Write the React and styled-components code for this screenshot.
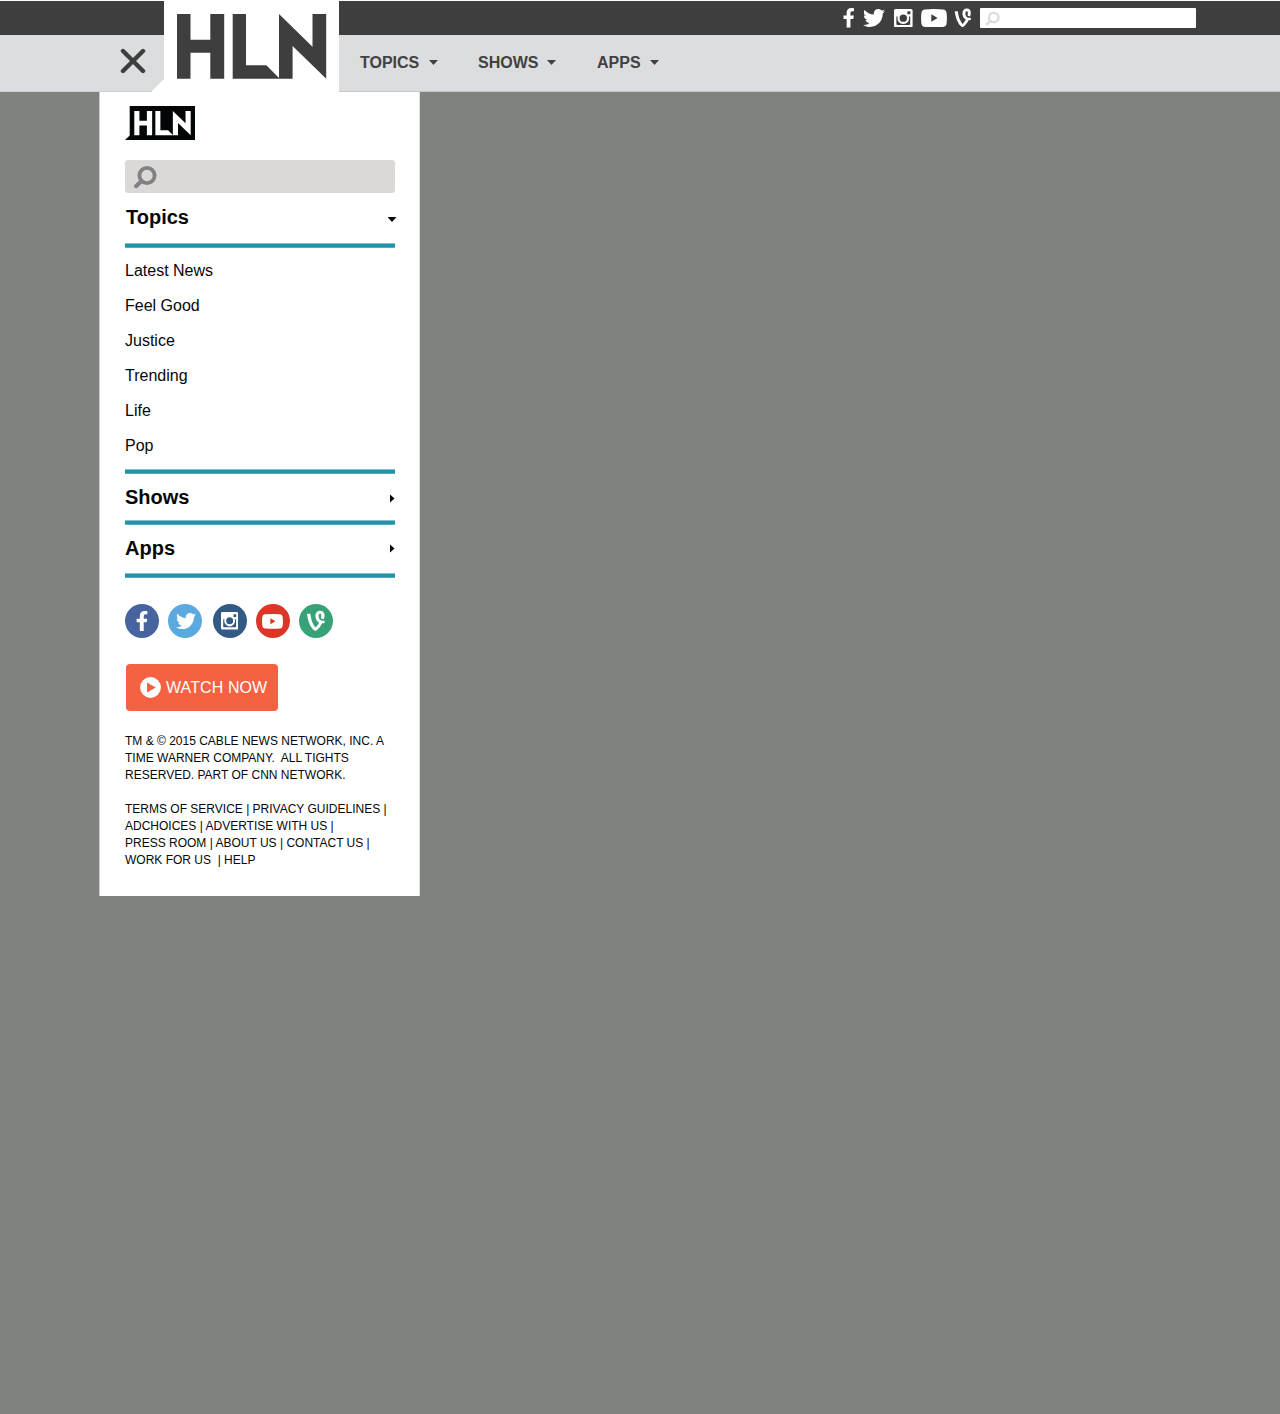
import React from "react";
import styled, { createGlobalStyle } from "styled-components";
import { FaFacebookF, FaTwitter, FaVine } from "react-icons/fa";

const GlobalStyle = createGlobalStyle`
  * { box-sizing: border-box; }
  body {
    margin: 0;
    background: #808280;
    font-family: "Liberation Sans", Arial, sans-serif;
    color: #060808;
  }
`;

const Page = styled.div`
  min-height: 1414px;
  background: #808280;
`;

const Header = styled.header`
  display: grid;
  grid-template-columns: 164px 174.5px 1fr;
  grid-template-rows: 34px 57px;
  padding-top: 1px;
  background: #fff;
`;

const TopStrip = styled.div`
  background: #3e3e3e;
`;

const LogoCell = styled.div`
  grid-column: 2;
  grid-row: 1 / 3;
  display: flex;
  padding: 13px 0 0 12.5px;
`;

const TopBar = styled.div`
  grid-column: 3;
  display: flex;
  align-items: center;
  background: #3e3e3e;
  color: #fff;
  padding-left: 503.5px;
`;

const SocialLink = styled.a`
  display: flex;
  justify-content: center;
  align-items: center;
  color: #fff;
  width: ${(p) => p.$width}px;
  height: 20px;
  margin-right: ${(p) => p.$gap}px;
  svg { flex: none; }
`;

const TopSearch = styled.div`
  width: 216px;
  height: 20px;
  padding: 3px 5px;
  border-radius: 1px;
  background: #fff;
  color: #dcdcdc;
`;

const MenuCell = styled.div`
  grid-column: 1;
  grid-row: 2;
  background: #dcddde;
  border-bottom: 1px solid #cfd1d0;
  padding: 13px 0 0 120px;
  clip-path: polygon(0 0, 100% 0, 100% 44px, 151px 100%, 0 100%);
`;

const Nav = styled.nav`
  grid-column: 3;
  grid-row: 2;
  display: flex;
  background: #dcddde;
  border-bottom: 1px solid #c5c9c6;
  padding: 18px 0 0 21.5px;
`;

const NavItem = styled.a`
  display: flex;
  width: ${(p) => p.$width}px;
  color: #414141;
  font-size: 16px;
  font-weight: 700;
  line-height: 19px;
`;

const NavLabel = styled.span`
  width: ${(p) => p.$width}px;
`;

const CaretDown = styled.span`
  width: 9px;
  height: 5px;
  margin-top: ${(p) => p.$top}px;
  background: currentColor;
  clip-path: polygon(0 0, 100% 0, 50% 100%);
`;

const CaretRight = styled(CaretDown)`
  width: 5px;
  height: 9px;
  margin-right: 0.5px;
  clip-path: polygon(0 0, 100% 50%, 0 100%);
`;

const Drawer = styled.aside`
  width: 321px;
  height: 804px;
  margin-left: 99px;
  padding: 14px 24px 0 25px;
  background: #fff;
  border-left: 1px solid #c8c9c8;
  border-right: 1px solid #dcdddc;
`;

const DrawerSearch = styled.div`
  width: 270px;
  height: 33px;
  margin-top: 20px;
  padding: 5px 8px;
  border-radius: 3px;
  background: #dad9d7;
  color: #808184;
`;

const SectionHead = styled.h2`
  display: flex;
  justify-content: space-between;
  width: ${(p) => p.$width || 270}px;
  height: ${(p) => p.$height}px;
  margin: 0;
  padding: ${(p) => p.$top}px 0 0 ${(p) => p.$indent || 0}px;
  font-size: 20px;
  line-height: 24px;
`;

const Rule = styled.div`
  width: 270px;
  height: 5px;
  background: #2094ab;
  border-top: 1px solid #85bfca;
  border-bottom: 1px solid #55abbb;
`;

const TopicList = styled.ul`
  list-style: none;
  margin: 0;
  padding: 5px 0 6px;
`;

const Topic = styled.li`
  height: 35px;
  font-size: 16px;
  line-height: 35px;
`;

const SocialRow = styled.div`
  display: flex;
  margin-top: 26px;
`;

const RoundLink = styled.a`
  display: flex;
  align-items: center;
  justify-content: center;
  flex: none;
  width: 34.4px;
  height: 34.4px;
  margin-right: ${(p) => p.$gap}px;
  padding-left: ${(p) => p.$left || 0}px;
  padding-right: ${(p) => p.$right || 0}px;
  border-radius: 50%;
  background: ${(p) => p.$color};
  color: #fff;
  svg { flex: none; }
`;

const WatchButton = styled.a`
  display: flex;
  align-items: center;
  gap: 5px;
  width: 152px;
  height: 47px;
  margin: 25.6px 0 0 1.4px;
  padding-left: 13.6px;
  border-radius: 4px;
  background: #f46242;
  color: #fff;
  font-size: 16px;
  line-height: 20px;
`;

const WatchLabel = styled.span`
  padding-top: 2px;
  white-space: nowrap;
  letter-spacing: 0.1px;
`;

const Legal = styled.p`
  margin: ${(p) => p.$top}px 0 0;
  font-size: 12px;
`;

const LegalLine = styled.span`
  display: block;
  line-height: 17px;
  white-space: pre;
`;

const HLN_SHAPE =
  "M0 0H13.5V25.8H33.3V0H47.2V64.8H33.3V38.8H13.5V64.8H0Z" +
  "M55.7 0H69V51.2H89.4L102 64V0L135.5 32.7V0H149.2V64.8L115.6 32V64.8H55.7Z";

function Logo() {
  return (
    <svg width="150" height="65" viewBox="0 0 150 65" fill="#3e3e3e" aria-label="HLN">
      <path d={HLN_SHAPE} />
    </svg>
  );
}

function SmallLogo() {
  return (
    <svg width="70" height="34" viewBox="0 0 70 34" display="block" aria-label="HLN">
      <path d="M4.7 0H70V34H0L4.7 29.5Z" fill="#030606" />
      <path d={HLN_SHAPE} fill="#fff" transform="translate(9.3 5) scale(.378 .375)" />
    </svg>
  );
}

function CloseIcon() {
  return (
    <svg width="26" height="26" viewBox="0 0 26 26" stroke="#3e3e3e" strokeWidth="4.4" strokeLinecap="round">
      <path d="M3 3L23 23M23 3L3 23" />
    </svg>
  );
}

function SearchIcon({ size }) {
  return (
    <svg width={size} height={size} viewBox="0 0 24 24" fill="none" stroke="currentColor" display="block">
      <circle cx="14" cy="10.5" r="7.6" strokeWidth="3.8" />
      <path d="M8.5 16L3 21.2" strokeWidth="4" strokeLinecap="round" />
    </svg>
  );
}

function CameraIcon({ width, height }) {
  return (
    <svg width={width} height={height} viewBox="0 0 18 18" preserveAspectRatio="none">
      <path
        fill="currentColor"
        fillRule="evenodd"
        d="M1.5 0H16.5Q18 0 18 1.5V16.5Q18 18 16.5 18H1.5Q0 18 0 16.5V1.5Q0 0 1.5 0ZM2.3 7.3V14.8Q2.3 15.6 3.1 15.6H14.9Q15.7 15.6 15.7 14.8V7.3H14.3A5.6 5.6 0 1 1 3.7 7.3ZM13 2.2V5.2H15.8V2.2ZM9 5.4A3.6 3.6 0 1 0 9 12.6A3.6 3.6 0 1 0 9 5.4Z"
      />
    </svg>
  );
}

function VideoIcon({ width, height }) {
  return (
    <svg width={width} height={height} viewBox="0 0 26 18" preserveAspectRatio="none">
      <path
        fill="currentColor"
        fillRule="evenodd"
        d="M4 .4Q13-.4 22 .4Q25.3 .6 25.6 4Q26.2 9 25.6 14Q25.3 17.4 22 17.6Q13 18.4 4 17.6Q.7 17.4 .4 14Q-.2 9 .4 4Q.7 .6 4 .4ZM10.3 5.2V12.4L16.6 8.8Z"
      />
    </svg>
  );
}

function PlayIcon() {
  return (
    <svg width="21" height="21" viewBox="0 0 21 21">
      <circle cx="10.5" cy="10.5" r="10.4" fill="#fff" />
      <path d="M7 5.6L15.8 10.5L7 15.4Z" fill="#f46242" />
    </svg>
  );
}

const topics = ["Latest News", "Feel Good", "Justice", "Trending", "Life", "Pop"];

export default function App() {
  return (
    <Page>
      <GlobalStyle />
      <Header>
        <TopStrip />
        <LogoCell><Logo /></LogoCell>
        <TopBar>
          <SocialLink $width={13} $gap={8}><FaFacebookF size={19.5} /></SocialLink>
          <SocialLink $width={22} $gap={9}><FaTwitter size={22} /></SocialLink>
          <SocialLink $width={19} $gap={8}><CameraIcon width={18.6} height={18.4} /></SocialLink>
          <SocialLink $width={26} $gap={8}><VideoIcon width={26} height={18.4} /></SocialLink>
          <SocialLink $width={16} $gap={9}><FaVine size={21.5} /></SocialLink>
          <TopSearch><SearchIcon size={15} /></TopSearch>
        </TopBar>
        <MenuCell><CloseIcon /></MenuCell>
        <Nav>
          <NavItem $width={118}><NavLabel $width={69}>TOPICS</NavLabel><CaretDown $top={7} /></NavItem>
          <NavItem $width={119}><NavLabel $width={69}>SHOWS</NavLabel><CaretDown $top={7} /></NavItem>
          <NavItem $width={90}><NavLabel $width={53}>APPS</NavLabel><CaretDown $top={7} /></NavItem>
        </Nav>
      </Header>
      <Drawer>
        <SmallLogo />
        <DrawerSearch><SearchIcon size={24} /></DrawerSearch>
        <SectionHead $height={50} $top={12} $indent={1} $width={271.5}>Topics<CaretDown $top={12} /></SectionHead>
        <Rule />
        <TopicList>
          {topics.map((t) => <Topic key={t}>{t}</Topic>)}
        </TopicList>
        <Rule />
        <SectionHead $height={46} $top={11}>Shows<CaretRight $top={9} /></SectionHead>
        <Rule />
        <SectionHead $height={48} $top={11}>Apps<CaretRight $top={8} /></SectionHead>
        <Rule />
        <SocialRow>
          <RoundLink $color="#4763a0" $gap={8.6}><FaFacebookF size={20} /></RoundLink>
          <RoundLink $color="#5aaae0" $gap={10.4} $left={2}><FaTwitter size={20} /></RoundLink>
          <RoundLink $color="#315b85" $gap={8.5} $right={1}><CameraIcon width={17.3} height={17.6} /></RoundLink>
          <RoundLink $color="#dd3527" $gap={8.5} $right={1}><VideoIcon width={21} height={14.8} /></RoundLink>
          <RoundLink $color="#37a277" $gap={0} $right={0.5}><FaVine size={23.5} /></RoundLink>
        </SocialRow>
        <WatchButton><PlayIcon /><WatchLabel>WATCH NOW</WatchLabel></WatchButton>
        <Legal $top={22}>
          <LegalLine>TM &amp; © 2015 CABLE NEWS NETWORK, INC. A</LegalLine>
          <LegalLine>{"TIME WARNER COMPANY.  ALL TIGHTS"}</LegalLine>
          <LegalLine>RESERVED. PART OF CNN NETWORK.</LegalLine>
        </Legal>
        <Legal $top={17}>
          <LegalLine>TERMS OF SERVICE | PRIVACY GUIDELINES |</LegalLine>
          <LegalLine>ADCHOICES | ADVERTISE WITH US |</LegalLine>
          <LegalLine>PRESS ROOM | ABOUT US | CONTACT US |</LegalLine>
          <LegalLine>{"WORK FOR US  | HELP"}</LegalLine>
        </Legal>
      </Drawer>
    </Page>
  );
}
